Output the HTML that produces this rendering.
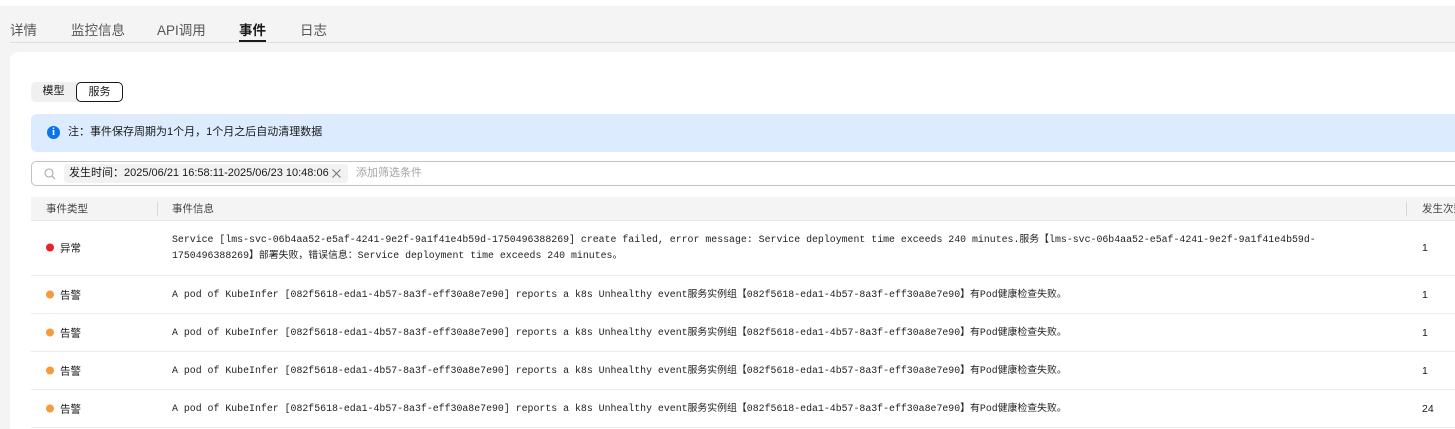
<!DOCTYPE html>
<html><head><meta charset="utf-8"><style>
*{box-sizing:border-box;margin:0;padding:0}
html,body{width:1455px;height:429px;overflow:hidden}
body{background:#f4f4f4;font-family:"Liberation Sans","Noto Sans CJK SC",sans-serif;color:#191919;position:relative}
.top{position:absolute;left:0;top:0;width:1455px;height:6px;background:#fff}
.tabs{position:absolute;left:10px;top:19px;right:0;height:24px;border-bottom:1px solid #dfdfdf;font-size:13.5px;color:#575757}
.tabs span{position:absolute;top:0}
.tabs .act{color:#191919;font-weight:bold}
.tabs .act:after{content:"";position:absolute;left:0;right:0;top:21px;height:2px;background:#191919}
.card{position:absolute;left:10px;top:52px;width:1460px;height:377px;background:#fff;border-radius:8px 8px 0 0}
.seg{position:absolute;left:31px;top:82px;height:20px;width:92px;background:#f0f0f0;border-radius:5px;font-size:11px}
.seg span{position:absolute;top:0;height:20px;line-height:19px;text-align:center}
.seg .a{left:0;width:45px}
.seg .b{left:45px;width:47px;background:#fff;border:1px solid #191919;border-radius:5px}
.info{position:absolute;left:31px;top:114px;width:1440px;height:38px;background:#dcebfd;border-radius:6px;font-size:11px;line-height:36px;padding-left:37px}
.info i{position:absolute;left:16px;top:12px;width:13px;height:13px;border-radius:50%;background:#0a75e8;color:#fff;font-style:normal;font-weight:bold;font-size:10px;line-height:13px;text-align:center;font-family:"Liberation Serif",serif}
.search{position:absolute;left:31px;top:161px;width:1440px;height:25px;border:1px solid #c2c2c2;border-radius:5px}
.tag{position:absolute;left:32px;top:2px;width:284px;height:19px;background:#f2f2f2;border-radius:3px;font-size:11px;line-height:19px;padding-left:5px}
.ph{position:absolute;left:324px;top:0;line-height:23px;font-size:11px;color:#a5a5a5}
.th{position:absolute;left:31px;top:197px;width:1440px;height:24px;background:#f4f4f4;border-bottom:1px solid #e8e8e8;font-size:10.5px;color:#444}
.th span{position:absolute;top:0;line-height:24px}
.th .d{position:absolute;top:5px;width:1px;height:14px;background:#d8d8d8}
.row{position:absolute;left:31px;width:1440px;border-bottom:1px solid #ebebeb;font-size:10.5px}
.row .t{position:absolute;left:15px;top:50%;transform:translateY(-50%)}
.row .t b{display:inline-block;width:8px;height:8px;border-radius:50%;margin-right:6px;vertical-align:-0px}
.row .m{position:absolute;left:141px;top:50%;transform:translateY(-50%);font-family:"Liberation Mono","Noto Sans CJK SC",monospace;font-size:9.9px;line-height:16px;white-space:pre;color:#222}
.row .n{position:absolute;left:1391px;top:50%;transform:translateY(-50%)}
</style></head><body>
<div class="top"></div>
<div class="tabs"><span style="left:0">详情</span><span style="left:61px">监控信息</span><span style="left:147px">API调用</span><span class="act" style="left:229px">事件</span><span style="left:290px">日志</span></div>
<div class="card"></div>
<div class="seg"><span class="a">模型</span><span class="b">服务</span></div>
<div class="info"><i>i</i>注：事件保存周期为1个月，1个月之后自动清理数据</div>
<div class="search"><svg style="position:absolute;left:12px;top:6px" width="12" height="12" viewBox="0 0 12 12"><circle cx="5" cy="5" r="4" fill="none" stroke="#aaa" stroke-width="1.1"/><path d="M8 8l3 3" stroke="#aaa" stroke-width="1.1"/></svg><div class="tag">发生时间：2025/06/21 16:58:11-2025/06/23 10:48:06<svg style="position:absolute;left:268px;top:5px" width="9" height="9" viewBox="0 0 9 9"><path d="M0.5 0.5l8 8M8.5 0.5l-8 8" stroke="#777" stroke-width="1.1"/></svg></div><span class="ph">添加筛选条件</span></div>
<div class="th"><span style="left:15px">事件类型</span><i class="d" style="left:126px"></i><span style="left:141px">事件信息</span><i class="d" style="left:1375px"></i><span style="left:1391px">发生次数</span></div>
<div class="row" style="top:221px;height:55px"><span class="t"><b style="background:#e8212a"></b>异常</span><span class="m">Service [lms-svc-06b4aa52-e5af-4241-9e2f-9a1f41e4b59d-1750496388269] create failed, error message: Service deployment time exceeds 240 minutes.服务【lms-svc-06b4aa52-e5af-4241-9e2f-9a1f41e4b59d-
1750496388269】部署失败，错误信息：Service deployment time exceeds 240 minutes。</span><span class="n">1</span></div>
<div class="row" style="top:276px;height:38px"><span class="t"><b style="background:#f59b3e"></b>告警</span><span class="m">A pod of KubeInfer [082f5618-eda1-4b57-8a3f-eff30a8e7e90] reports a k8s Unhealthy event服务实例组【082f5618-eda1-4b57-8a3f-eff30a8e7e90】有Pod健康检查失败。</span><span class="n">1</span></div>
<div class="row" style="top:314px;height:38px"><span class="t"><b style="background:#f59b3e"></b>告警</span><span class="m">A pod of KubeInfer [082f5618-eda1-4b57-8a3f-eff30a8e7e90] reports a k8s Unhealthy event服务实例组【082f5618-eda1-4b57-8a3f-eff30a8e7e90】有Pod健康检查失败。</span><span class="n">1</span></div>
<div class="row" style="top:352px;height:38px"><span class="t"><b style="background:#f59b3e"></b>告警</span><span class="m">A pod of KubeInfer [082f5618-eda1-4b57-8a3f-eff30a8e7e90] reports a k8s Unhealthy event服务实例组【082f5618-eda1-4b57-8a3f-eff30a8e7e90】有Pod健康检查失败。</span><span class="n">1</span></div>
<div class="row" style="top:390px;height:38px"><span class="t"><b style="background:#f59b3e"></b>告警</span><span class="m">A pod of KubeInfer [082f5618-eda1-4b57-8a3f-eff30a8e7e90] reports a k8s Unhealthy event服务实例组【082f5618-eda1-4b57-8a3f-eff30a8e7e90】有Pod健康检查失败。</span><span class="n">24</span></div>
</body></html>
